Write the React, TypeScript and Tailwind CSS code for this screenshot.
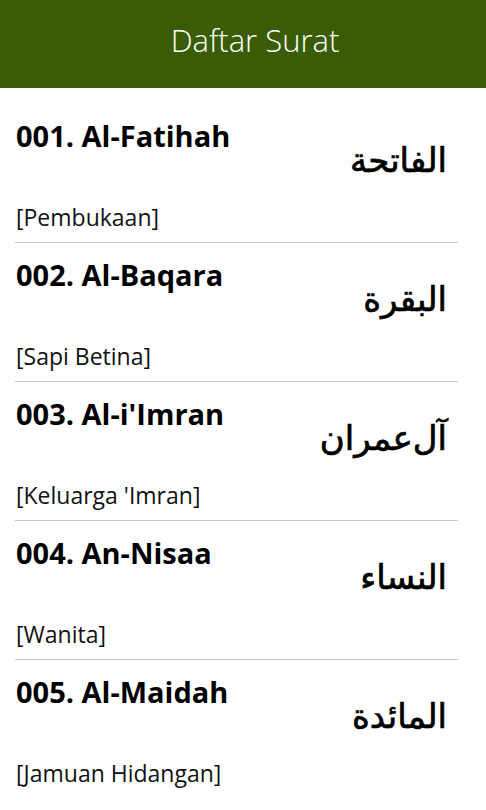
import React from "react";

const items = [
  { t: "001. Al-Fatihah", s: "[Pembukaan]", a: "الفاتحة" },
  { t: "002. Al-Baqara", s: "[Sapi Betina]", a: "البقرة" },
  { t: "003. Al-i'Imran", s: "[Keluarga 'Imran]", a: "آل‌عمران" },
  { t: "004. An-Nisaa", s: "[Wanita]", a: "النساء" },
  { t: "005. Al-Maidah", s: "[Jamuan Hidangan]", a: "المائدة" },
];

export default function App() {
  return (
    <div className="w-[486px] h-[810px] overflow-hidden bg-white" style={{ fontFamily: '"Open Sans", "Noto Sans", sans-serif' }}>
      <div className="h-[88px] bg-[#3a5d04] flex items-center justify-center pb-[8px]">
        <span className="text-white text-[31px] font-light pl-[24px] leading-none">Daftar Surat</span>
      </div>
      <div className="pt-[16px]">
        {items.map((it, i) => (
          <div key={i} className="px-[15px]">
            <div className="mr-[13px] pt-[14px] pb-[10px] flex justify-between items-start">
              <div className="flex flex-col pl-[1px]">
                <div className="text-[29px] font-bold text-black leading-[36px]">{it.t}</div>
                <div className="text-[23px] text-[#111] leading-[30px] mt-[48px]">{it.s}</div>
              </div>
              <div dir="rtl" className="mt-[22px] mr-[11px] text-[34px] text-black leading-[40px] [-webkit-text-stroke:0.7px_black]" style={{ fontFamily: '"DejaVu Sans", sans-serif' }}>{it.a}</div>
            </div>
            {i < items.length - 1 && <div className="h-px bg-[#c9c9c9] mr-[13px]" />}
          </div>
        ))}
      </div>
    </div>
  );
}
